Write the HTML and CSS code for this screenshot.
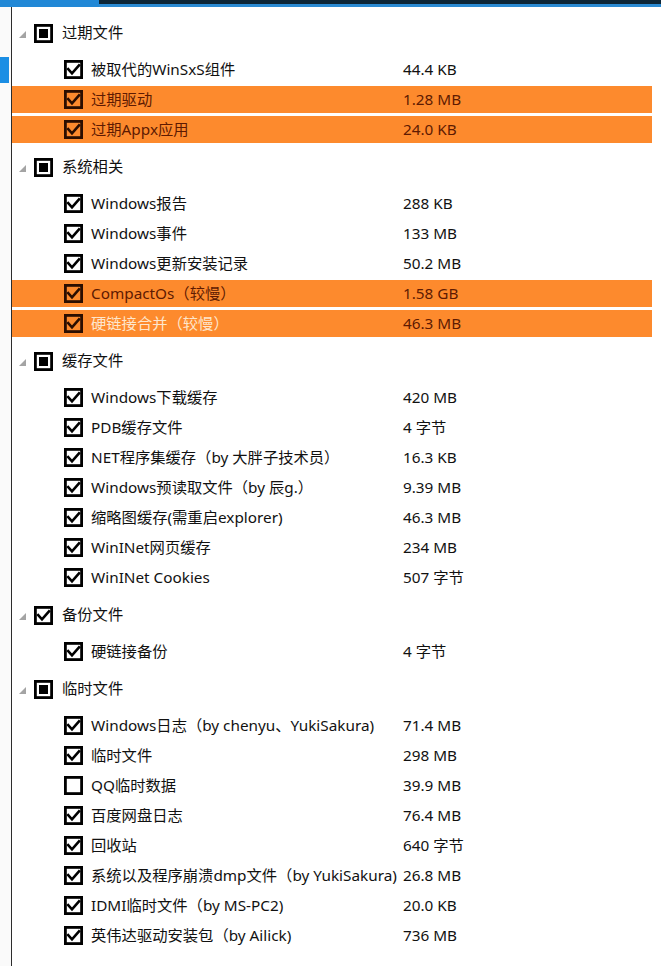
FILE: index.html
```html
<!DOCTYPE html>
<html lang="zh-CN">
<head>
<meta charset="utf-8">
<title>清理</title>
<link rel="stylesheet" href="styles.css">
</head>
<body>
<div class="topbar"><div class="tb-left"></div><div class="tb-right"></div></div>
<div class="main">
  <div class="rail"><div class="rail-mark"></div></div>
  <div class="tree">

    <div class="group">
      <div class="group-head">
        <svg class="arrow" viewBox="0 0 7 7"><polygon points="7,0 7,7 0,7"/></svg>
        <svg class="cb" viewBox="0 0 19 19"><rect class="box" x="1.4" y="1.4" width="16.2" height="16.2"/><rect class="ind" x="5" y="5" width="9" height="9"/></svg>
        <span class="gname">过期文件</span>
      </div>
      <div class="row"><div class="item"><svg class="cb" viewBox="0 0 19 19"><rect class="box" x="1.4" y="1.4" width="16.2" height="16.2"/><path class="tick" d="M4.2 9.2 L8 13.4 L15 5.4"/></svg><span class="name">被取代的WinSxS组件</span><span class="size">44.4 KB</span></div></div>
      <div class="row"><div class="item hl"><svg class="cb" viewBox="0 0 19 19"><rect class="box" x="1.4" y="1.4" width="16.2" height="16.2"/><path class="tick" d="M4.2 9.2 L8 13.4 L15 5.4"/></svg><span class="name">过期驱动</span><span class="size">1.28 MB</span></div></div>
      <div class="row"><div class="item hl"><svg class="cb" viewBox="0 0 19 19"><rect class="box" x="1.4" y="1.4" width="16.2" height="16.2"/><path class="tick" d="M4.2 9.2 L8 13.4 L15 5.4"/></svg><span class="name">过期Appx应用</span><span class="size">24.0 KB</span></div></div>
    </div>

    <div class="group">
      <div class="group-head">
        <svg class="arrow" viewBox="0 0 7 7"><polygon points="7,0 7,7 0,7"/></svg>
        <svg class="cb" viewBox="0 0 19 19"><rect class="box" x="1.4" y="1.4" width="16.2" height="16.2"/><rect class="ind" x="5" y="5" width="9" height="9"/></svg>
        <span class="gname">系统相关</span>
      </div>
      <div class="row"><div class="item"><svg class="cb" viewBox="0 0 19 19"><rect class="box" x="1.4" y="1.4" width="16.2" height="16.2"/><path class="tick" d="M4.2 9.2 L8 13.4 L15 5.4"/></svg><span class="name">Windows报告</span><span class="size">288 KB</span></div></div>
      <div class="row"><div class="item"><svg class="cb" viewBox="0 0 19 19"><rect class="box" x="1.4" y="1.4" width="16.2" height="16.2"/><path class="tick" d="M4.2 9.2 L8 13.4 L15 5.4"/></svg><span class="name">Windows事件</span><span class="size">133 MB</span></div></div>
      <div class="row"><div class="item"><svg class="cb" viewBox="0 0 19 19"><rect class="box" x="1.4" y="1.4" width="16.2" height="16.2"/><path class="tick" d="M4.2 9.2 L8 13.4 L15 5.4"/></svg><span class="name">Windows更新安装记录</span><span class="size">50.2 MB</span></div></div>
      <div class="row"><div class="item hl"><svg class="cb" viewBox="0 0 19 19"><rect class="box" x="1.4" y="1.4" width="16.2" height="16.2"/><path class="tick" d="M4.2 9.2 L8 13.4 L15 5.4"/></svg><span class="name">CompactOs（较慢）</span><span class="size">1.58 GB</span></div></div>
      <div class="row"><div class="item hl light"><svg class="cb" viewBox="0 0 19 19"><rect class="box" x="1.4" y="1.4" width="16.2" height="16.2"/><path class="tick" d="M4.2 9.2 L8 13.4 L15 5.4"/></svg><span class="name">硬链接合并（较慢）</span><span class="size">46.3 MB</span></div></div>
    </div>

    <div class="group">
      <div class="group-head">
        <svg class="arrow" viewBox="0 0 7 7"><polygon points="7,0 7,7 0,7"/></svg>
        <svg class="cb" viewBox="0 0 19 19"><rect class="box" x="1.4" y="1.4" width="16.2" height="16.2"/><rect class="ind" x="5" y="5" width="9" height="9"/></svg>
        <span class="gname">缓存文件</span>
      </div>
      <div class="row"><div class="item"><svg class="cb" viewBox="0 0 19 19"><rect class="box" x="1.4" y="1.4" width="16.2" height="16.2"/><path class="tick" d="M4.2 9.2 L8 13.4 L15 5.4"/></svg><span class="name">Windows下载缓存</span><span class="size">420 MB</span></div></div>
      <div class="row"><div class="item"><svg class="cb" viewBox="0 0 19 19"><rect class="box" x="1.4" y="1.4" width="16.2" height="16.2"/><path class="tick" d="M4.2 9.2 L8 13.4 L15 5.4"/></svg><span class="name">PDB缓存文件</span><span class="size">4 字节</span></div></div>
      <div class="row"><div class="item"><svg class="cb" viewBox="0 0 19 19"><rect class="box" x="1.4" y="1.4" width="16.2" height="16.2"/><path class="tick" d="M4.2 9.2 L8 13.4 L15 5.4"/></svg><span class="name">NET程序集缓存（by 大胖子技术员）</span><span class="size">16.3 KB</span></div></div>
      <div class="row"><div class="item"><svg class="cb" viewBox="0 0 19 19"><rect class="box" x="1.4" y="1.4" width="16.2" height="16.2"/><path class="tick" d="M4.2 9.2 L8 13.4 L15 5.4"/></svg><span class="name">Windows预读取文件（by 辰g.）</span><span class="size">9.39 MB</span></div></div>
      <div class="row"><div class="item"><svg class="cb" viewBox="0 0 19 19"><rect class="box" x="1.4" y="1.4" width="16.2" height="16.2"/><path class="tick" d="M4.2 9.2 L8 13.4 L15 5.4"/></svg><span class="name">缩略图缓存(需重启explorer)</span><span class="size">46.3 MB</span></div></div>
      <div class="row"><div class="item"><svg class="cb" viewBox="0 0 19 19"><rect class="box" x="1.4" y="1.4" width="16.2" height="16.2"/><path class="tick" d="M4.2 9.2 L8 13.4 L15 5.4"/></svg><span class="name">WinINet网页缓存</span><span class="size">234 MB</span></div></div>
      <div class="row"><div class="item"><svg class="cb" viewBox="0 0 19 19"><rect class="box" x="1.4" y="1.4" width="16.2" height="16.2"/><path class="tick" d="M4.2 9.2 L8 13.4 L15 5.4"/></svg><span class="name">WinINet Cookies</span><span class="size">507 字节</span></div></div>
    </div>

    <div class="group">
      <div class="group-head">
        <svg class="arrow" viewBox="0 0 7 7"><polygon points="7,0 7,7 0,7"/></svg>
        <svg class="cb" viewBox="0 0 19 19"><rect class="box" x="1.4" y="1.4" width="16.2" height="16.2"/><path class="tick" d="M4.2 9.2 L8 13.4 L15 5.4"/></svg>
        <span class="gname">备份文件</span>
      </div>
      <div class="row"><div class="item"><svg class="cb" viewBox="0 0 19 19"><rect class="box" x="1.4" y="1.4" width="16.2" height="16.2"/><path class="tick" d="M4.2 9.2 L8 13.4 L15 5.4"/></svg><span class="name">硬链接备份</span><span class="size">4 字节</span></div></div>
    </div>

    <div class="group">
      <div class="group-head">
        <svg class="arrow" viewBox="0 0 7 7"><polygon points="7,0 7,7 0,7"/></svg>
        <svg class="cb" viewBox="0 0 19 19"><rect class="box" x="1.4" y="1.4" width="16.2" height="16.2"/><rect class="ind" x="5" y="5" width="9" height="9"/></svg>
        <span class="gname">临时文件</span>
      </div>
      <div class="row"><div class="item"><svg class="cb" viewBox="0 0 19 19"><rect class="box" x="1.4" y="1.4" width="16.2" height="16.2"/><path class="tick" d="M4.2 9.2 L8 13.4 L15 5.4"/></svg><span class="name">Windows日志（by chenyu、YukiSakura)</span><span class="size">71.4 MB</span></div></div>
      <div class="row"><div class="item"><svg class="cb" viewBox="0 0 19 19"><rect class="box" x="1.4" y="1.4" width="16.2" height="16.2"/><path class="tick" d="M4.2 9.2 L8 13.4 L15 5.4"/></svg><span class="name">临时文件</span><span class="size">298 MB</span></div></div>
      <div class="row"><div class="item"><svg class="cb" viewBox="0 0 19 19"><rect class="box" x="1.4" y="1.4" width="16.2" height="16.2"/></svg><span class="name">QQ临时数据</span><span class="size">39.9 MB</span></div></div>
      <div class="row"><div class="item"><svg class="cb" viewBox="0 0 19 19"><rect class="box" x="1.4" y="1.4" width="16.2" height="16.2"/><path class="tick" d="M4.2 9.2 L8 13.4 L15 5.4"/></svg><span class="name">百度网盘日志</span><span class="size">76.4 MB</span></div></div>
      <div class="row"><div class="item"><svg class="cb" viewBox="0 0 19 19"><rect class="box" x="1.4" y="1.4" width="16.2" height="16.2"/><path class="tick" d="M4.2 9.2 L8 13.4 L15 5.4"/></svg><span class="name">回收站</span><span class="size">640 字节</span></div></div>
      <div class="row"><div class="item"><svg class="cb" viewBox="0 0 19 19"><rect class="box" x="1.4" y="1.4" width="16.2" height="16.2"/><path class="tick" d="M4.2 9.2 L8 13.4 L15 5.4"/></svg><span class="name">系统以及程序崩溃dmp文件（by YukiSakura)</span><span class="size">26.8 MB</span></div></div>
      <div class="row"><div class="item"><svg class="cb" viewBox="0 0 19 19"><rect class="box" x="1.4" y="1.4" width="16.2" height="16.2"/><path class="tick" d="M4.2 9.2 L8 13.4 L15 5.4"/></svg><span class="name">IDMI临时文件（by MS-PC2)</span><span class="size">20.0 KB</span></div></div>
      <div class="row"><div class="item"><svg class="cb" viewBox="0 0 19 19"><rect class="box" x="1.4" y="1.4" width="16.2" height="16.2"/><path class="tick" d="M4.2 9.2 L8 13.4 L15 5.4"/></svg><span class="name">英伟达驱动安装包（by Ailick)</span><span class="size">736 MB</span></div></div>
    </div>

  </div>
</div>
</body>
</html>
```

FILE: styles.css
```css
html, body {
  margin: 0;
  padding: 0;
  background: #ffffff;
}
body {
  width: 661px;
  height: 966px;
  overflow: hidden;
  font-family: "Noto Sans", "Noto Sans CJK SC", sans-serif;
  font-size: 15.3px;
  line-height: 20px;
  color: #111111;
}
.topbar {
  display: flex;
  height: 7px;
}
.tb-left {
  width: 99px;
  background: #2188d6;
}
.tb-right {
  flex: 1;
  background: #0d2536;
  border-bottom: 3px solid #2b8ad2;
  box-sizing: border-box;
}
.main {
  display: flex;
  min-height: 959px;
}
.rail {
  width: 11px;
  border-right: 1px solid #2d2d2d;
  background: #fafafa;
}
.rail-mark {
  margin-top: 50px;
  width: 9px;
  height: 26px;
  background: #1b8ee4;
}
.tree {
  flex: 1;
  padding: 4px 9px 0 0;
}
.group-head {
  display: flex;
  align-items: center;
  height: 30px;
  margin: 7px 0;
  padding-left: 7px;
}
.arrow {
  width: 7px;
  height: 7px;
  fill: #a4a4a4;
  margin-top: 3px;
}
.group-head .cb {
  margin-left: 8px;
}
.gname {
  margin-left: 9px;
  height: 20px;
  padding-bottom: 2px;
}
.cb {
  width: 19px;
  height: 19px;
  flex: none;
  color: #000;
}
.box {
  fill: #ffffff;
  stroke: currentColor;
  stroke-width: 2.8;
}
.ind {
  fill: currentColor;
}
.tick {
  fill: none;
  stroke: currentColor;
  stroke-width: 2.6;
  stroke-linecap: square;
}
.row {
  height: 30px;
  padding-top: 1px;
  box-sizing: border-box;
}
.item {
  display: flex;
  align-items: center;
  height: 27px;
  padding-left: 52px;
}
.name {
  margin-left: 8px;
  width: 312px;
  height: 20px;
  white-space: nowrap;
  padding-bottom: 2px;
}
.size {
  height: 20px;
  white-space: nowrap;
  padding-bottom: 2px;
}
.hl {
  background: #fd8a2d;
  color: #5e1a02;
}
.hl .cb {
  color: #2c0e00;
}
.hl .box {
  fill: none;
}
.hl.light {
  color: #fde6cc;
}
.hl.light .size {
  color: #5e1a02;
}
```
